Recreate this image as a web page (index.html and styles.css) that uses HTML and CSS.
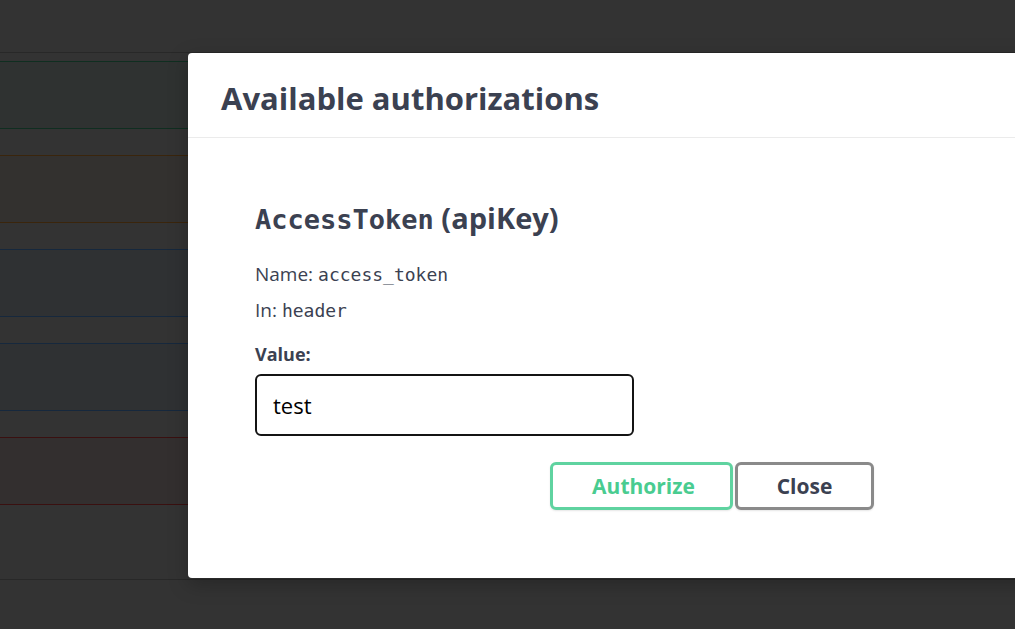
FILE: index.html
```html
<!DOCTYPE html>
<html lang="en">
<head>
<meta charset="utf-8">
<title>Available authorizations</title>
<link rel="stylesheet" href="styles.css">
</head>
<body>
<div class="page">
  <div class="topstrip"></div>
  <div class="ops">
    <div class="opblock op-post"></div>
    <div class="opblock op-put"></div>
    <div class="opblock op-get"></div>
    <div class="opblock op-get"></div>
    <div class="opblock op-delete"></div>
  </div>
  <div class="models"></div>
</div>

<div class="dialog">
  <div class="dialog-header">
    <h3 class="dialog-title">Available authorizations</h3>
  </div>
  <div class="dialog-content">
    <h4 class="scheme-title"><code class="scheme-name">AccessToken</code> (apiKey)</h4>
    <p class="meta">Name: <code class="mono">access_token</code></p>
    <p class="meta meta-in">In: <code class="mono">header</code></p>
    <label class="value-label" for="token">Value:</label>
    <input class="value-input" id="token" type="text" value="test">
    <div class="btn-row">
      <button class="btn btn-authorize" type="button">Authorize</button>
      <button class="btn btn-close" type="button">Close</button>
    </div>
  </div>
</div>
</body>
</html>
```

FILE: styles.css
```css
* { box-sizing: border-box; }

html, body {
  margin: 0;
  padding: 0;
}

body {
  width: 1015px;
  height: 629px;
  overflow: hidden;
  background: #333333;
  font-family: "Open Sans", "Noto Sans", sans-serif;
  position: relative;
}

.page {
  display: flex;
  flex-direction: column;
}

.topstrip {
  height: 53px;
  border-bottom: 1px solid #282828;
}

.ops {
  padding-top: 8px;
  display: flex;
  flex-direction: column;
  gap: 26px;
}

.opblock {
  height: 68px;
  border-top: 1px solid;
  border-bottom: 1px solid;
}

.op-post { background: #2f3231; border-color: #0f2e20; }
.op-put { background: #33312f; border-color: #3a250c; }
.op-get { background: #2f3133; border-color: #16283d; }
.op-delete { background: #332f2f; border-color: #3a1010; }

.models {
  margin-top: 74px;
  border-top: 1px solid #282828;
  height: 60px;
}

.dialog {
  position: absolute;
  left: 188px;
  top: 53px;
  width: 975px;
  height: 525px;
  background: #ffffff;
  border-radius: 4px;
  box-shadow: 0 6px 20px rgba(0, 0, 0, 0.25);
  color: #3b4151;
}

.dialog-header {
  padding: 27px 33px 21px;
  border-bottom: 1px solid #ebebeb;
}

.dialog-title {
  margin: 0;
  font-size: 31px;
  line-height: 36px;
  font-weight: 700;
  color: #3b4151;
}

.dialog-content {
  width: 686px;
  padding: 0 0 0 67px;
  display: flex;
  flex-direction: column;
  align-items: flex-start;
}

.scheme-title {
  margin: 64px 0 0;
  font-size: 29px;
  line-height: 32px;
  font-weight: 700;
  white-space: nowrap;
}

.scheme-name {
  font-family: "DejaVu Sans Mono", "Liberation Mono", monospace;
  font-size: 27px;
  font-weight: 700;
}

.meta {
  margin: 26px 0 0;
  font-size: 19px;
  line-height: 24px;
}

.meta-in {
  margin-top: 11px;
}

.mono {
  font-family: "DejaVu Sans Mono", "Liberation Mono", monospace;
  font-size: 18px;
}

.value-label {
  margin-top: 19px;
  font-size: 18px;
  line-height: 24px;
  font-weight: 700;
}

.value-input {
  margin-top: 8px;
  width: 379px;
  height: 62px;
  border: 2px solid #141414;
  border-radius: 6px;
  padding: 0 16px;
  font-family: "Open Sans", "Noto Sans", sans-serif;
  font-size: 22px;
  color: #000;
  outline: none;
}

.btn-row {
  margin-top: 26px;
  width: 619px;
  display: flex;
  justify-content: flex-end;
  gap: 2px;
}

.btn {
  height: 48px;
  border: 3px solid;
  border-radius: 6px;
  background: #fff;
  font-family: "Open Sans", "Noto Sans", sans-serif;
  font-size: 21px;
  font-weight: 700;
  box-shadow: 0 1px 2px rgba(0, 0, 0, 0.1);
  padding: 0;
}

.btn-authorize {
  width: 183px;
  border-color: #5fd3a0;
  color: #49cc90;
  padding-left: 4px;
}

.btn-close {
  width: 139px;
  border-color: #8a8a8a;
  color: #3b4151;
}
```
